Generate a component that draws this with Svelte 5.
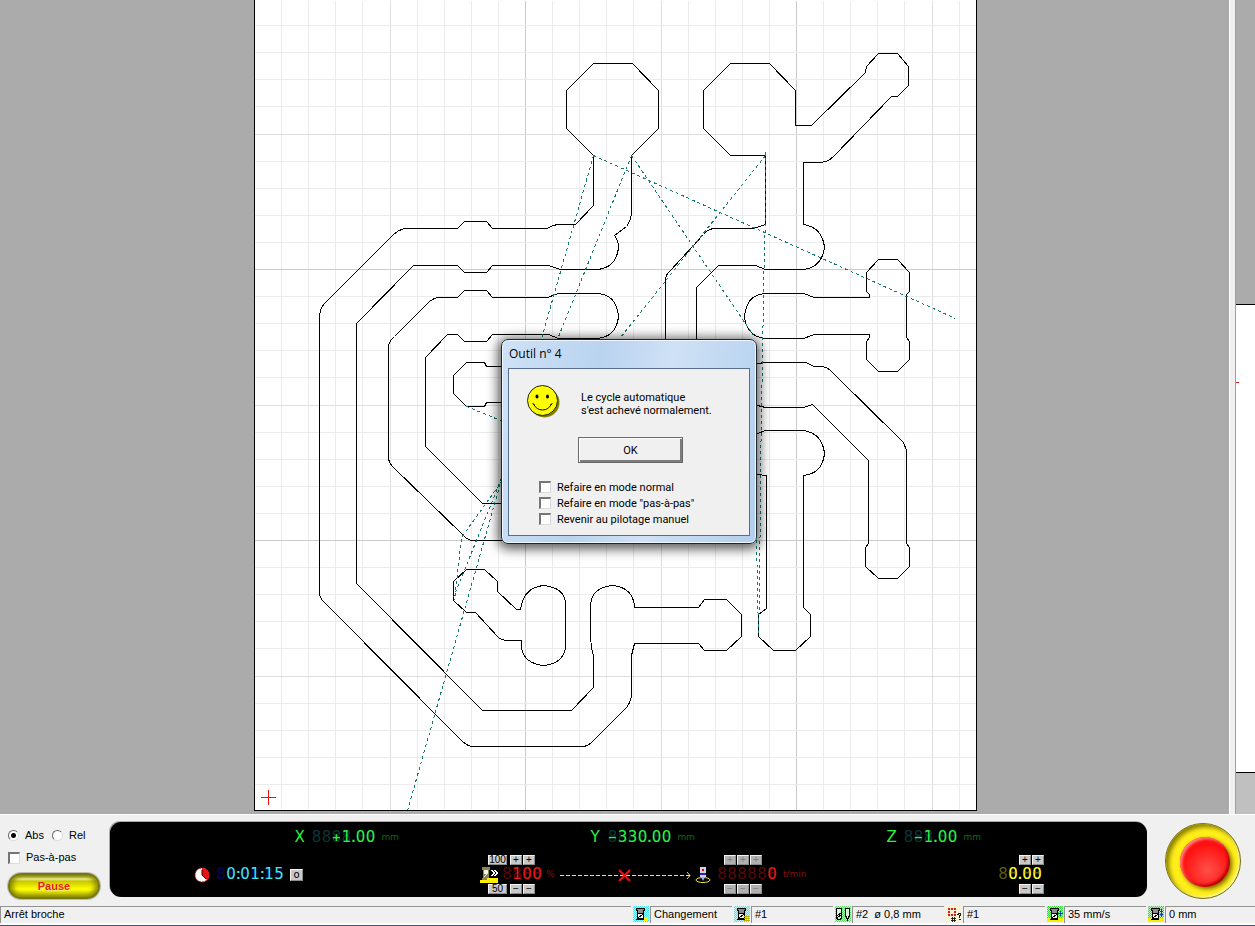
<script>
  // Sheet geometry: one minor grid step is 2.5 mm
  const STEP = 27.1;
  const LEFT = 254;
  const BOTTOM = 811;

  const columns = Array.from({ length: 26 }, (_, i) => i + 1);
  const rows = Array.from({ length: 29 }, (_, i) => i + 1);

  function gridClass(i) {
    if (i % 10 === 0) return 'major';
    if (i % 5 === 0) return 'middle';
    return 'minor';
  }

  // Isolation contours around the copper tracks
  const contours = [
    'M593 155 L566 128 V90 L593 63 H632 L658 90 V128 L631 155 V213 Q630 221 626 226 L614 235 Q618 240 618 247 Q616 267 597 269 H560 L548 265 H492 L486 272 H464 L457 265 H413 L356 323 V583 L482 710 H571 L593 687 V655 Q589 647 590 605 Q591 587 612 585 Q633 587 634 607 H698 L704 599 H726 L741 614 V636 L726 650 H704 L698 643 H634 L631 655 V695 Q630 703 625 708 L592 741 Q587 746 582 746 H471 Q466 745 462 741 L325 603 Q319 598 319 592 V317 Q319 308 325 302 L392 235 Q398 229 405 228 H457 L464 221 H486 L492 228 H547 Q552 224 560 224 H575 L593 205 Z',
    'M505 540 H471 Q466 539 462 534 L393 467 Q388 462 388 457 V347 Q388 341 394 336 L428 302 Q432 298 438 297 H457 L464 290 H486 L492 297 H547 L558 293 H597 Q616 294 618 316 Q616 336 597 338 H558 L548 334 H492 L486 341 H464 L457 334 H447 L425 357 V446 L482 503 H505',
    'M505 366 H486 L484 362 H466 L453 375 V393 L466 406 H484 L486 402 H505',
    'M466 569 H484 L497 581 V591 L516 609 H520 Q523 587 543 585 Q564 587 565 603 V647 Q563 663 543 665 Q524 663 521 648 V640 H507 Q501 640 497 636 L475 612 H466 L453 600 V581 Z',
    'M765 155 H730 L703 128 V90 L730 63 H769 L795 90 V125 H811 L865 72 L866 66 L878 53 H897 L908 66 V85 L897 96 H891 L833 156 Q827 162 818 162 H803 V224 Q822 227 824 247 Q821 267 803 269 H765 L755 265 H718 L696 287 V345',
    'M665 345 V278 Q666 273 670 270 L703 234 Q707 229 713 228 H753 L765 224 V155',
    'M744 316 Q746 294 765 293 H803 L814 297 H869 V294 L866 291 V272 L878 259 H897 L909 272 V291 L906 294 V337 L909 341 V359 L897 371 H878 L866 359 V341 L869 337 V334 H814 L803 338 H765 Q746 336 744 316 Z',
    'M750 363 H757 L765 362 H805 L814 366 H822 Q828 367 833 373 L903 442 L906 450 V543 L909 547 V566 L897 578 H878 L865 566 V547 L868 543 V460 L812 404 L803 407 H765 L757 405 H750',
    'M750 433 H757 L765 430 H803 Q822 433 824 453 Q822 473 803 475 V607 L810 614 V636 L795 650 H773 L758 636 V614 L766 608 V475 L757 474 H750',
  ];

  // Rapid moves between contours
  const rapids = [
    'M593 155 L955 318',
    'M593 155 L407 810',
    'M631 155 L453 597',
    'M631 155 L753 335',
    'M765 151 V225 L764 240 L760 470 L759 610',
    'M765 155 L620 337',
    'M466 406 L505 422',
    'M502 480 L461 537 L454 600',
    'M756 540 L758 636',
  ];

  const axes = [
    { name: 'X', value: '  +1.00' },
    { name: 'Y', value: '-330.00' },
    { name: 'Z', value: ' -1.00' },
  ];

  const statusItems = [
    { icon: 'change', text: 'Changement' },
    { icon: 'tool', text: '#1' },
    { icon: 'diameter', text: '#2  ø 0,8 mm' },
    { icon: 'origin', text: '#1' },
    { icon: 'speed', text: '35 mm/s' },
    { icon: 'depth', text: '0 mm' },
  ];

  const tints = {
    change: '#48e4ee',
    tool: '#48e4ee',
    diameter: '#5cd466',
    origin: '#fff08a',
    speed: '#30d83c',
    depth: '#30d83c',
  };

  const choices = ['Refaire en mode normal', 'Refaire en mode "pas-à-pas"', 'Revenir au pilotage manuel'];
</script>

{#snippet led(value)}
  <span class="led">
    {#each value.split('') as char}
      {#if char === '.' || char === ':'}
        <span class="point">{char}</span>
      {:else}
        <span class="cell" class:sign={char === '+' || char === '-'}>{char === '-' ? '−' : char}</span>
      {/if}
    {/each}
  </span>
{/snippet}

{#snippet statusIcon(kind)}
  <svg class="status-icon" viewBox="0 0 16 16" width="16" height="16" shape-rendering="crispEdges">
    <defs>
      <pattern id="tint-{kind}" width="2" height="2" patternUnits="userSpaceOnUse">
        <rect width="2" height="2" fill={tints[kind]} />
        <path d="M0 0h1v1h-1zM1 1h1v1h-1z" fill="#fff" fill-opacity="0.7" />
      </pattern>
    </defs>
    <rect width="16" height="16" fill="url(#tint-{kind})" />
    {#if kind === 'diameter'}
      <path d="M1.500 2.500h5v9l-1 2h-3l-1-2zM10.500 2.500h4v7l-2 4l-2-4z" fill="#d8f4d8" stroke="#000" />
      <path d="M2 10l4-3M2 12l4-3" stroke="#000" />
    {:else if kind === 'origin'}
      <path d="M2 2h2v2h-2zM5 2h2v2h-2zM8 2h2v2h-2zM2 5h2v2h-2zM8 5h2v2h-2zM2 8h2v2h-2zM5 8h2v2h-2zM8 8h2v2h-2z" fill="#e01818" />
      <path d="M6.500 11v5M8.500 11v5M5 12.500h5M5 14.500h5M11 8.500h1v-1h2v2h-1v2M13 13h1v1" fill="none" stroke="#222" />
    {:else}
      {#if kind === 'depth' || kind === 'speed'}
        <rect y="12" width="16" height="4" fill="#f4f000" />
      {/if}
      <path d="M3.500 2.500h8v2h-1v3h-6v-3h-1z" fill="#8c8c8c" stroke="#000" />
      <path d="M4.500 7.500h6v5h-6z" fill="#f4f4f4" stroke="#000" />
      <path d="M5 12l5-4" stroke="#000" />
      <path d="M3 13.500h8" stroke="#000" />
      {#if kind === 'change'}
        <rect x="11" y="11" width="4" height="4" fill="#fff000" />
      {:else if kind === 'tool'}
        <path d="M10 10.500h5M10 12.500h5M10 14.500h5" stroke="#b8ae00" />
      {:else if kind === 'speed'}
        <path d="M11 7.500h5M13.500 5v5" stroke="#0b3ccc" />
      {:else}
        <path d="M13.500 3v8M12 8.500h3M12 5.500h3" stroke="#0b3ccc" />
      {/if}
    {/if}
  </svg>
{/snippet}

<div class="app">
  <main class="workspace">
    <section class="view">
      <svg class="sheet" viewBox="254 0 723 811" width="723" height="811">
        <rect x="254" y="-10" width="723" height="821" fill="#fff" />
        <g class="grid" transform="translate(0.5 0.5)">
          {#each columns as i}
            <path class={gridClass(i)} d="M{Math.round(LEFT + i * STEP)} 0V810" />
          {/each}
          {#each rows as i}
            <path class={gridClass(i)} d="M254 {Math.round(BOTTOM - i * STEP)}H976" />
          {/each}
        </g>
        <g class="contours" transform="translate(0.5 0.5)">
          {#each contours as d}
            <path {d} />
          {/each}
          <path d="M254 -5V810H976V-5" />
        </g>
        <g class="rapids" transform="translate(0.5 0.5)">
          {#each rapids as d}
            <path {d} />
          {/each}
        </g>
        <path class="origin" d="M261 797.500H276M268.500 790V805" />
      </svg>
    </section>
    <aside class="side-view">
      <div class="side-above"></div>
      <div class="side-page"><span class="side-mark"></span></div>
      <div class="side-below"></div>
    </aside>
  </main>

  <section class="controls">
    <form class="modes">
      <div class="radios">
        <label><input type="radio" name="coords" value="abs" checked />Abs</label>
        <label><input type="radio" name="coords" value="rel" />Rel</label>
      </div>
      <label class="step"><input type="checkbox" />Pas-à-pas</label>
      <button type="button" class="pause">Pause</button>
    </form>

    <div class="panel">
      <div class="axes">
        {#each axes as axis}
          <div class="readout green">
            <span class="axis-name">{axis.name}</span>
            {@render led(axis.value)}
            <span class="unit">mm</span>
          </div>
        {/each}
      </div>

      <div class="gauges">
        <div class="readout cyan clock">
          <svg width="16" height="16" viewBox="0 0 16 16">
            <circle cx="8" cy="8" r="7" fill="#fff" stroke="#e00" stroke-dasharray="2 1" />
            <path d="M8 8V1a7 7 0 0 1 5 12z" fill="#e81414" />
            <path d="M8 3v5l4 4" fill="none" stroke="#300" />
          </svg>
          {@render led(' 0:01:15')}
          <button type="button" class="key" aria-label="Remise à zéro">o</button>
        </div>

        <div class="gauge feed">
          <div class="keys">
            <button type="button" class="key wide">100</button>
            <button type="button" class="key">+</button>
            <button type="button" class="key">+</button>
          </div>
          <div class="readout red">
            <svg width="18" height="16" viewBox="0 0 18 16" shape-rendering="crispEdges">
              <path d="M2 0h8v3h-1v8h1v2h-8v-2h1v-8h-1z" fill="#8d8550" />
              <path d="M4 3h4v4h-4z" fill="#f4f4e4" />
              <path d="M4 10l4-4" stroke="#eee" />
              <path d="M0 13h7v-2h11v5h-18z" fill="#ffee00" />
              <path d="M11.500 3l3 3l-3 3M14.500 3l3 3l-3 3" fill="none" stroke="#fff" />
            </svg>
            {@render led(' 100')}
            <span class="unit">%</span>
          </div>
          <div class="keys">
            <button type="button" class="key wide">50</button>
            <button type="button" class="key">−</button>
            <button type="button" class="key">−</button>
          </div>
        </div>

        <svg class="link" width="132" height="16" viewBox="0 0 132 16">
          <path d="M0 8.500H130" stroke="#f5e84c" stroke-dasharray="4 2" />
          <path d="M127 5l3 3.500l-3 3.500" fill="none" stroke="#f5e84c" />
          <path d="M59 3L70 14M70 3L59 14" stroke="#e81414" stroke-width="2" />
        </svg>

        <div class="gauge spindle">
          <div class="keys">
            {#each [1, 2, 3] as n (n)}
              <button type="button" class="key" disabled>+</button>
            {/each}
          </div>
          <div class="readout red">
            <svg width="16" height="16" viewBox="0 0 16 16">
              <ellipse cx="8" cy="13" rx="7" ry="2.500" fill="none" stroke="#f0e040" />
              <rect x="5" y="0" width="6" height="10" fill="#d4d4e0" />
              <rect x="7" y="2" width="2" height="2" fill="#e00" />
              <rect x="5" y="6" width="6" height="2" fill="#2222cc" />
              <path d="M6 10h4l-2 4z" fill="#9ab0e8" />
            </svg>
            {@render led('     0')}
            <span class="unit">t/min</span>
          </div>
          <div class="keys">
            {#each [1, 2, 3] as n (n)}
              <button type="button" class="key" disabled>−</button>
            {/each}
          </div>
        </div>

        <div class="gauge depth">
          <div class="keys">
            <button type="button" class="key">+</button>
            <button type="button" class="key">+</button>
          </div>
          <div class="readout yellow">{@render led(' 0.00')}</div>
          <div class="keys">
            <button type="button" class="key">−</button>
            <button type="button" class="key">−</button>
          </div>
        </div>
      </div>
    </div>

    <button type="button" class="emergency" aria-label="Arrêt d'urgence"><span></span></button>
  </section>

  <footer class="status">
    <div class="status-cell message">Arrêt broche</div>
    {#each statusItems as item}
      <div class="status-item" class:long={item.icon === 'diameter'}>
        {@render statusIcon(item.icon)}
        <div class="status-cell">{item.text}</div>
      </div>
    {/each}
  </footer>

  <div class="dialog" role="dialog" aria-labelledby="dialog-title">
    <h1 id="dialog-title">Outil n° 4</h1>
    <div class="dialog-body">
      <div class="message-row">
        <svg width="33" height="33" viewBox="0 0 33 33">
          <circle cx="17.500" cy="17.500" r="15" fill="#808000" />
          <circle cx="15.500" cy="15.500" r="15" fill="#ff0" stroke="#222" stroke-width="1" />
          <ellipse cx="10" cy="11.500" rx="1.500" ry="2" />
          <ellipse cx="20.500" cy="11.500" rx="1.500" ry="2" />
          <path d="M5.500 18.500l2 1M25.500 18.500l-2 1M6.500 19q3 6 9 6t9-6" fill="none" stroke="#000" />
        </svg>
        <p>Le cycle automatique<br />s'est achevé normalement.</p>
      </div>
      <button type="button" class="ok">OK</button>
      <div class="choices">
        {#each choices as choice}
          <label><input type="checkbox" />{choice}</label>
        {/each}
      </div>
    </div>
  </div>
</div>

<style>
  :global(body) {
    margin: 0;
    background: #f0f0f0;
  }

  .app {
    position: relative;
    display: flex;
    flex-direction: column;
    height: 100vh;
    overflow: hidden;
    font-family: 'Liberation Sans', Arial, sans-serif;
    font-size: 11px;
    line-height: 13px;
    color: #000;
    background: #f0f0f0;
  }

  button {
    font: inherit;
    padding: 0;
    cursor: pointer;
  }

  /* Work area */
  .workspace {
    flex: 1;
    display: flex;
    min-height: 0;
    gap: 5px;
    border-bottom: 1px solid #fff;
  }

  .view {
    flex: 1;
    display: flex;
    justify-content: center;
    align-items: flex-end;
    min-width: 0;
    padding: 0 0 3px 2px;
    border-right: 1px solid #fff;
    background: #ababab;
  }

  .sheet {
    display: block;
    flex: none;
    overflow: visible;
    shape-rendering: crispEdges;
  }

  .grid path { fill: none; }
  .minor { stroke: #ebebeb; }
  .middle { stroke: #dedede; }
  .major { stroke: #cbcbcb; }

  .contours path {
    fill: none;
    stroke: #000;
  }

  .rapids path {
    fill: none;
    stroke: #0f7a72;
    stroke-dasharray: 3 3;
  }

  .origin { stroke: #f01010; }

  .side-view {
    width: 19px;
    display: flex;
    flex-direction: column;
    border-left: 1px solid #a0a0a0;
  }

  .side-above {
    flex: 304;
    background: #ababab;
  }

  .side-page {
    flex: 468;
    border-top: 1px solid #000;
    border-bottom: 1px solid #000;
    background: #fff;
  }

  .side-mark {
    display: block;
    width: 3px;
    height: 1px;
    margin-top: 77px;
    background: #d02020;
  }

  .side-below {
    flex: 41;
    background: #c0c0c0;
  }

  /* Control bar */
  .controls {
    display: flex;
    align-items: center;
    height: 91px;
  }

  .modes {
    box-sizing: border-box;
    width: 110px;
    padding: 7px 10px 0 8px;
    display: flex;
    flex-direction: column;
    gap: 9px;
  }

  .modes label {
    display: flex;
    align-items: center;
    gap: 6px;
  }

  .radios {
    display: flex;
    gap: 8px;
  }

  input {
    appearance: none;
    box-sizing: border-box;
    margin: 0;
    background: #fff;
  }

  input[type='checkbox'] {
    width: 12px;
    height: 12px;
    border: 1px solid #dcdcdc;
    border-top: 2px solid #767676;
    border-left: 2px solid #767676;
  }

  input[type='radio'] {
    width: 11px;
    height: 11px;
    border: 1px solid #dcdcdc;
    border-top-color: #666;
    border-left-color: #666;
    border-radius: 50%;
  }

  input[type='radio']:checked {
    background: radial-gradient(circle, #000 2px, #fff 3px);
  }

  .pause {
    box-sizing: border-box;
    height: 26px;
    border: 2px solid #77780c;
    border-radius: 13px;
    background: linear-gradient(#8a8a10, #f6f6a0 18%, #c8c800 28%, #ffff00 65%, #a8a800);
    box-shadow: inset 3px 0 5px #8a8a00, inset -3px 0 5px #8a8a00, 0 0 0 1px #bcbcae;
    color: #e8200c;
    font-weight: bold;
    text-shadow: 1px 1px #ffe9a0;
  }

  .panel {
    flex: 1;
    min-width: 0;
    height: 75px;
    margin-bottom: 2px;
    border-radius: 11px;
    background: #000;
    box-shadow: -1px -1px #a8a8a8;
  }

  .axes {
    display: grid;
    grid-template-columns: minmax(0, 289fr) minmax(0, 296fr) minmax(0, 286fr) minmax(0, 166fr);
    align-items: center;
    height: 30px;
  }

  .axes .readout { justify-content: flex-end; }

  .gauges {
    display: grid;
    grid-template-columns: minmax(0, 84fr) minmax(0, 286fr) minmax(0, 80fr) minmax(0, 135fr) minmax(0, 303fr) minmax(0, 149fr);
    align-items: center;
    height: 45px;
  }

  .clock { grid-column: 2; }

  .readout {
    display: flex;
    align-items: center;
    gap: 6px;
    height: 19px;
    font-family: 'DejaVu Sans', Verdana, sans-serif;
  }

  .axis-name {
    width: 11px;
    font-size: 15px;
  }

  .unit {
    font-size: 9px;
    color: var(--dim);
  }

  .led {
    display: flex;
    isolation: isolate;
    font-size: 15px;
    line-height: 19px;
  }

  .cell {
    position: relative;
    width: 10px;
    height: 19px;
    text-align: center;
  }

  /* Unlit segments stay faintly visible behind every digit */
  .cell::before {
    content: '8';
    position: absolute;
    inset: 0;
    z-index: -1;
    color: var(--ghost);
    font-size: 15px;
    font-weight: normal;
  }

  .sign {
    font-size: 11px;
    font-weight: bold;
  }

  .point {
    width: 4px;
    font-family: 'Liberation Sans', Arial, sans-serif;
    font-size: 14px;
    font-weight: bold;
  }

  .green { color: #2cf23c; --dim: #0c6a14; --ghost: #0c3434; }
  .cyan { color: #40e8f0; --ghost: #06065e; }
  .red { color: #f01818; --dim: #8a1010; --ghost: #5a0808; }
  .yellow { color: #ffff30; --ghost: #5c5c10; }

  .keys {
    display: flex;
    gap: 1px;
  }

  .key {
    box-sizing: border-box;
    width: 12px;
    height: 10px;
    border: 1px solid #f4f4f4;
    border-right-color: #8c8c8c;
    border-bottom-color: #8c8c8c;
    background: #c8c8c8;
    color: #000;
    font-size: 10px;
    line-height: 8px;
  }

  .key:disabled {
    background: #b0b0b0;
    color: #808080;
  }

  .key.wide {
    width: 19px;
    margin-right: 2px;
  }

  .clock .key {
    height: 12px;
    width: 13px;
  }

  .feed .keys { padding-left: 8px; }
  .feed .readout { gap: 4px; }
  .spindle .keys { padding-left: 29px; }
  .depth .keys { padding-left: 21px; }

  .emergency {
    flex: none;
    box-sizing: border-box;
    width: 76px;
    height: 76px;
    margin: 0 14px 0 18px;
    display: grid;
    place-items: center;
    border: 1px solid #77701c;
    border-radius: 50%;
    background: #ffee18;
    box-shadow: inset 3px 3px 4px #8c8200, inset -1px -1px 3px #fffbd0;
  }

  .emergency span {
    width: 50px;
    height: 50px;
    margin: 3px 0 0 3px;
    border-radius: 50%;
    background: radial-gradient(circle at 55% 65%, #ff5048, #ff1010 60%, #f00808);
    box-shadow: inset 2px 2px 3px #ff8a80, inset -2px -2px 3px #b00000, 2px 2px 4px #7a6400;
  }

  /* Status bar */
  .status {
    display: flex;
    height: 17px;
    padding-bottom: 2px;
    border-bottom: 1px solid #2f5f74;
    box-shadow: inset 0 -2px #fff;
    gap: 2px;
  }

  .status-item {
    display: flex;
    gap: 1px;
    width: 99px;
  }

  .status-item.long { width: 109px; }
  .status-item:last-child { width: 107px; }

  .status-icon { flex: none; }

  .status-cell {
    flex: 1;
    padding-left: 3px;
    border-top: 1px solid #929292;
    border-left: 1px solid #929292;
    line-height: 15px;
    white-space: pre;
  }

  /* Message window */
  .dialog {
    position: absolute;
    left: 501px;
    top: 339px;
    width: 256px;
    height: 205px;
    box-sizing: border-box;
    display: flex;
    flex-direction: column;
    padding: 0 6px 7px;
    border: 1px solid #20262e;
    border-radius: 7px;
    background: linear-gradient(100deg, #cfe2f7, #b9d3ef 35%, #cfe1f5 60%, #b2cfee);
    box-shadow: inset 0 0 0 1px #eef6ff, 0 2px 12px 3px rgba(0, 0, 0, 0.65);
  }

  .dialog h1 {
    margin: 0;
    padding-left: 1px;
    font-family: 'Open Sans', 'Segoe UI', sans-serif;
    font-size: 12px;
    font-weight: normal;
    line-height: 28px;
  }

  .dialog-body {
    flex: 1;
    display: flex;
    flex-direction: column;
    padding: 16px 0 0 18px;
    border: 1px solid #566f8d;
    background: #f0f0f0;
    font-family: Roboto, Arial, sans-serif;
  }

  .message-row {
    display: flex;
    align-items: center;
    gap: 21px;
  }

  .message-row p { margin: 4px 0 0; }

  .ok {
    width: 105px;
    height: 26px;
    margin: 19px 0 16px 51px;
    border: 1px solid #6a6a6a;
    background: #f0f0f0;
    box-shadow: inset 1px 1px #fff, inset -2px -2px #7c7c7c;
  }

  .choices {
    display: flex;
    flex-direction: column;
    padding-left: 12px;
  }

  .choices label {
    display: flex;
    align-items: center;
    gap: 6px;
    height: 16px;
  }
</style>
